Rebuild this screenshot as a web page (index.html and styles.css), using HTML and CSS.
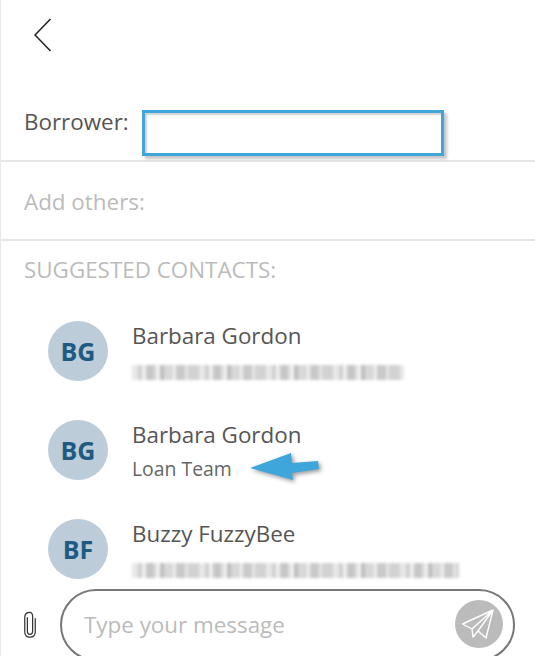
FILE: index.html
```html
<!DOCTYPE html>
<html>
<head>
  <title>New conversation</title>
  <link rel="stylesheet" href="styles.css">
</head>
<body>
  <div class="screen">
    <div class="top-bar">
      <svg class="back-icon" width="18" height="34" viewBox="0 0 18 34">
        <path d="M16.5 1 L1 17 L16.5 33" fill="none" stroke="#222" stroke-width="1.6"/>
      </svg>
    </div>

    <div class="borrower-row">
      <span class="borrower-label">Borrower:</span>
      <div class="borrower-input"></div>
    </div>

    <div class="others-row">Add others:</div>

    <div class="suggested">
      <div class="suggested-title">SUGGESTED CONTACTS:</div>

      <div class="contact">
        <div class="avatar">BG</div>
        <div class="contact-info">
          <div class="contact-name">Barbara Gordon</div>
          <div class="blur-mail mail-one"></div>
        </div>
      </div>

      <div class="contact">
        <div class="avatar">BG</div>
        <div class="contact-info">
          <div class="contact-name">Barbara Gordon</div>
          <div class="contact-sub">Loan Team</div>
        </div>
        <svg class="arrow" width="76" height="34" viewBox="0 0 76 34">
          <path d="M1 16 L42 1 L43 11 L69 9 L70 17 L43 21 L44 28 Z" fill="#3ea6da"/>
        </svg>
      </div>

      <div class="contact">
        <div class="avatar">BF</div>
        <div class="contact-info">
          <div class="contact-name">Buzzy FuzzyBee</div>
          <div class="blur-mail mail-two"></div>
        </div>
      </div>
    </div>

    <div class="composer">
      <svg class="clip-icon" width="14" height="27" viewBox="0 0 16 30" preserveAspectRatio="none">
        <path d="M5 7 V22 C5 25 6.5 26 8 26 C9.5 26 11 25 11 22 V6 C11 3 9.5 1.5 7.5 1.5 C5 1.5 2 3 2 7 V23 C2 27 4.5 29 8 29 C11.5 29 14 27 14 23 V8" fill="none" stroke="#333" stroke-width="1.4"/>
      </svg>
      <div class="message-box">
        <span class="placeholder">Type your message</span>
        <div class="send-btn">
          <svg width="34" height="34" viewBox="0 0 34 34">
            <path d="M31 3 L0.5 17 L10 22 L11 30 L16 24 L24 31 Z M31 3 L10 22 M31 3 L16 24" fill="none" stroke="#fff" stroke-width="1.4" stroke-linejoin="round"/>
          </svg>
        </div>
      </div>
    </div>
  </div>
</body>
</html>
```

FILE: styles.css
```css
* {
  box-sizing: border-box;
}
body {
  margin: 0;
  font-family: "Open Sans", sans-serif;
  color: #555;
  background: #fff;
}
.screen {
  display: flex;
  flex-direction: column;
  width: 535px;
  height: 656px;
  overflow: hidden;
  border-left: 1px solid #e8e8e8;
}
.top-bar {
  flex: none;
  height: 100px;
  padding: 18px 0 0 33px;
}
.back-icon {
  display: block;
}
.borrower-row {
  flex: none;
  display: flex;
  align-items: flex-start;
  gap: 13px;
  height: 62px;
  padding: 10px 0 0 23px;
  border-bottom: 2px solid #e6e6e6;
}
.borrower-label {
  font-size: 22.4px;
  line-height: 24px;
}
.borrower-input {
  width: 302px;
  height: 46px;
  border: 3px solid #3ea6da;
  box-shadow: 3px 3px 3px #c4c4c4, inset 2px 2px 2px #d0d0d0;
}
.others-row {
  flex: none;
  height: 79px;
  padding: 26px 0 0 23px;
  font-size: 22.4px;
  line-height: 28px;
  color: #bbb;
  border-bottom: 2px solid #e6e6e6;
}
.suggested {
  flex: 1;
  min-height: 0;
  overflow: hidden;
  padding: 15px 0 0 23px;
}
.suggested-title {
  font-size: 22.4px;
  line-height: 28px;
  color: #bbb;
  margin-bottom: 37px;
}
.contact {
  position: relative;
  display: flex;
  gap: 24px;
  height: 99px;
  padding-left: 24px;
}
.avatar {
  flex: none;
  display: flex;
  align-items: center;
  justify-content: center;
  width: 60px;
  height: 60px;
  border-radius: 50%;
  background: #bccdd9;
  color: #1f5a82;
  font-size: 25px;
  font-weight: 700;
}
.contact-info {
  min-width: 0;
}
.contact-name {
  font-size: 22.4px;
  line-height: 30px;
}
.contact-sub {
  margin-top: 5px;
  font-size: 19.4px;
  line-height: 28px;
  color: #666;
}
.blur-mail {
  height: 15px;
  margin-top: 14px;
  filter: blur(1.4px);
  background-color: #e4e4e4;
  background-image: repeating-linear-gradient(90deg,
    #e8e8e8 0 6px, #cfcfcf 6px 10px, #f0f0f0 10px 14px, #c6c6c6 14px 22px,
    #e0e0e0 22px 25px, #f4f4f4 25px 28px, #bdbdbd 28px 32px, #d8d8d8 32px 41px,
    #efefef 41px 44px, #c9c9c9 44px 53px, #e6e6e6 53px 56px, #d2d2d2 56px 67px);
}
.mail-one {
  width: 272px;
}
.mail-two {
  width: 327px;
}
.arrow {
  position: absolute;
  left: 225px;
  top: 32px;
  filter: drop-shadow(2px 2px 2px #999);
}
.composer {
  flex: none;
  display: flex;
  align-items: flex-start;
  gap: 23px;
  height: 67px;
  padding-left: 22px;
  background: #fff;
}
.clip-icon {
  flex: none;
  margin-top: 22px;
}
.message-box {
  flex: none;
  display: flex;
  align-items: center;
  justify-content: space-between;
  width: 455px;
  height: 72px;
  padding: 0 10px 2px 22px;
  border: 2px solid #777;
  border-radius: 36px;
}
.placeholder {
  font-size: 22.4px;
  color: #bbb;
}
.send-btn {
  display: flex;
  align-items: center;
  justify-content: center;
  width: 48px;
  height: 48px;
  border-radius: 50%;
  background: #bbb;
}
```
